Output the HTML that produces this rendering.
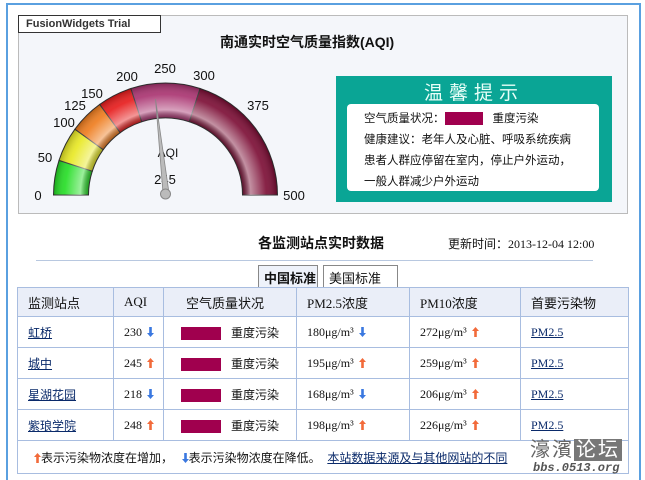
<!DOCTYPE html>
<html><head><meta charset="utf-8"><style>
*{margin:0;padding:0;box-sizing:border-box}
body{width:645px;height:480px;background:#fff;font-family:"Liberation Serif","Noto Sans CJK SC",serif;position:relative;overflow:hidden;font-size:12px;color:#111}
.abs{position:absolute}
.cn{font-family:"Liberation Sans","Noto Sans CJK SC",sans-serif}
table{border-collapse:collapse;position:absolute;left:17px;top:287px;width:612px}
td{border:1px solid #a8bde0;height:31px;padding-left:10px;font-size:12px}
tr.h td{background:#eaeef8;height:29px;font-size:13px}
.sw{display:inline-block;width:40px;height:13px;background:#a0004e;vertical-align:middle;margin:0 10px 0 17px}
a{color:#0a2a6a;text-decoration:underline}
.ar{display:inline-block;width:7px;height:10px;vertical-align:-1px;margin-left:2px}
</style></head><body>
<svg width="0" height="0" style="position:absolute"><defs>
<symbol id="u" viewBox="0 0 7 10"><path d="M3.5 0 L7 4 L4.8 4 L4.8 10 L2.2 10 L2.2 4 L0 4Z" fill="#f26a3a"/></symbol>
<symbol id="d" viewBox="0 0 7 10"><path d="M3.5 10 L7 6 L4.8 6 L4.8 0 L2.2 0 L2.2 6 L0 6Z" fill="#3a78e0"/></symbol>
</defs></svg>
<div class="abs" style="left:6px;top:3px;width:635px;height:477px;border-left:2px solid #5aa0e0;border-top:2px solid #5aa0e0;border-right:2px solid #5aa0e0"></div>
<div class="abs" style="left:18px;top:15px;width:610px;height:199px;background:#f4f6fa;border:1px solid #bbb"></div>
<div class="abs cn" style="left:18px;top:15px;width:143px;height:18px;border:1px solid #333;background:#fff;font-size:11px;font-weight:bold;color:#333;padding:2px 0 0 7px">FusionWidgets Trial</div>
<div class="abs cn" style="left:220px;top:32px;font-size:14px;font-weight:bold">南通实时空气质量指数(AQI)</div>
<svg class="abs" style="left:0;top:0" width="330" height="220">
<defs>
<radialGradient id="g" cx="165.5" cy="195" r="112" gradientUnits="userSpaceOnUse"><stop offset="0.68" stop-color="#000" stop-opacity=".3"/><stop offset="0.76" stop-color="#fff" stop-opacity=".55"/><stop offset="0.9" stop-color="#fff" stop-opacity=".1"/><stop offset="1" stop-color="#000" stop-opacity=".25"/></radialGradient>
</defs>
<g stroke="#333" stroke-width="1">
<path d="M53.5 195 A112 112 0 0 1 59 160.4 L92.3 171.2 A77 77 0 0 0 88.5 195Z" fill="#22dd22"/>
<path d="M59 160.4 A112 112 0 0 1 74.9 129.2 L103.2 149.7 A77 77 0 0 0 92.3 171.2Z" fill="#e8e820"/>
<path d="M74.9 129.2 A112 112 0 0 1 99.7 104.4 L120.2 132.7 A77 77 0 0 0 103.2 149.7Z" fill="#ee7a1a"/>
<path d="M99.7 104.4 A112 112 0 0 1 130.9 88.5 L141.7 121.8 A77 77 0 0 0 120.2 132.7Z" fill="#e61818"/>
<path d="M130.9 88.5 A112 112 0 0 1 200.1 88.5 L189.3 121.8 A77 77 0 0 0 141.7 121.8Z" fill="#a8306e"/>
<path d="M200.1 88.5 A112 112 0 0 1 277.5 195 L242.5 195 A77 77 0 0 0 189.3 121.8Z" fill="#7a0a32"/>
</g>
<path d="M53.5 195 A112 112 0 0 1 277.5 195 L242.5 195 A77 77 0 0 0 88.5 195Z" fill="url(#g)"/>
<g font-family="Liberation Sans" font-size="13" fill="#111" text-anchor="middle">
<text x="38" y="200">0</text><text x="45" y="162">50</text><text x="64" y="127">100</text><text x="75" y="110">125</text><text x="92" y="98">150</text><text x="127" y="81">200</text><text x="165" y="73">250</text><text x="204" y="80">300</text><text x="258" y="110">375</text><text x="294" y="200">500</text>
<text x="168" y="157" font-size="12">AQI</text><text x="165" y="184">245</text>
</g>
<path d="M155.5 99 L163 193 L169 193 Z" fill="#bbb" stroke="#888" stroke-width=".8"/>
<circle cx="165.5" cy="194" r="5" fill="#bbb" stroke="#888"/>
</svg>
<div class="abs" style="left:336px;top:76px;width:276px;height:126px;background:#0aa595"></div>
<div class="abs cn" style="left:336px;top:78px;width:276px;text-align:center;color:#e8fff8;font-size:19px;letter-spacing:6px">温馨提示</div>
<div class="abs cn" style="left:347px;top:104px;width:252px;height:87px;background:#fff;border-radius:4px;font-size:11.5px;line-height:21px;padding:5px 0 0 17px">空气质量状况：<span style="display:inline-block;width:38px;height:13px;background:#a0004e;vertical-align:middle;margin-right:10px"></span>重度污染<br>健康建议：老年人及心脏、呼吸系统疾病<br>患者人群应停留在室内，停止户外运动，<br>一般人群减少户外运动</div>
<div class="abs cn" style="left:258px;top:233px;font-size:14px;font-weight:bold">各监测站点实时数据</div>
<div class="abs" style="left:448px;top:235px;font-size:12px">更新时间：2013-12-04 12:00</div>
<div class="abs" style="left:36px;top:260px;width:557px;height:1px;background:#b8c8e0"></div>
<div class="abs cn" style="left:258px;top:265px;width:60px;height:22px;border:1px solid #888;border-bottom:none;background:#eef2fa;font-weight:bold;font-size:13px;padding:2px 0 0 5px">中国标准</div>
<div class="abs cn" style="left:323px;top:265px;width:75px;height:22px;border:1px solid #888;border-bottom:none;background:#fff;font-size:13px;padding:2px 0 0 5px">美国标准</div>
<table>
<tr class="h"><td style="width:96px">监测站点</td><td style="width:50px">AQI</td><td style="width:133px;padding-left:22px">空气质量状况</td><td style="width:113px">PM2.5浓度</td><td style="width:111px">PM10浓度</td><td>首要污染物</td></tr>
<tr><td class="cn"><a>虹桥</a></td><td>230 <svg class="ar"><use href="#d"/></svg></td><td class="cn" style="padding:0"><span class="sw"></span>重度污染</td><td>180μg/m³ <svg class="ar"><use href="#d"/></svg></td><td>272μg/m³ <svg class="ar"><use href="#u"/></svg></td><td><a>PM2.5</a></td></tr>
<tr><td class="cn"><a>城中</a></td><td>245 <svg class="ar"><use href="#u"/></svg></td><td class="cn" style="padding:0"><span class="sw"></span>重度污染</td><td>195μg/m³ <svg class="ar"><use href="#u"/></svg></td><td>259μg/m³ <svg class="ar"><use href="#u"/></svg></td><td><a>PM2.5</a></td></tr>
<tr><td class="cn"><a>星湖花园</a></td><td>218 <svg class="ar"><use href="#d"/></svg></td><td class="cn" style="padding:0"><span class="sw"></span>重度污染</td><td>168μg/m³ <svg class="ar"><use href="#d"/></svg></td><td>206μg/m³ <svg class="ar"><use href="#u"/></svg></td><td><a>PM2.5</a></td></tr>
<tr><td class="cn"><a>紫琅学院</a></td><td>248 <svg class="ar"><use href="#u"/></svg></td><td class="cn" style="padding:0"><span class="sw"></span>重度污染</td><td>198μg/m³ <svg class="ar"><use href="#u"/></svg></td><td>226μg/m³ <svg class="ar"><use href="#u"/></svg></td><td><a>PM2.5</a></td></tr>
<tr><td colspan="6" class="cn" style="height:33px;padding-left:14px"><svg class="ar"><use href="#u"/></svg>表示污染物浓度在增加，&nbsp; <svg class="ar"><use href="#d"/></svg>表示污染物浓度在降低。&nbsp; <a>本站数据来源及与其他网站的不同</a></td></tr>
</table>
<div class="abs cn" style="left:530px;top:433px;font-size:20px;color:#666;letter-spacing:2px">濠濱<span style="background:#777;color:#fff;padding:0 2px">论坛</span></div>
<div class="abs" style="left:533px;top:461px;font-family:'Liberation Mono',monospace;font-size:12px;font-weight:bold;font-style:italic;color:#555">bbs.0513.org</div>
</body></html>
